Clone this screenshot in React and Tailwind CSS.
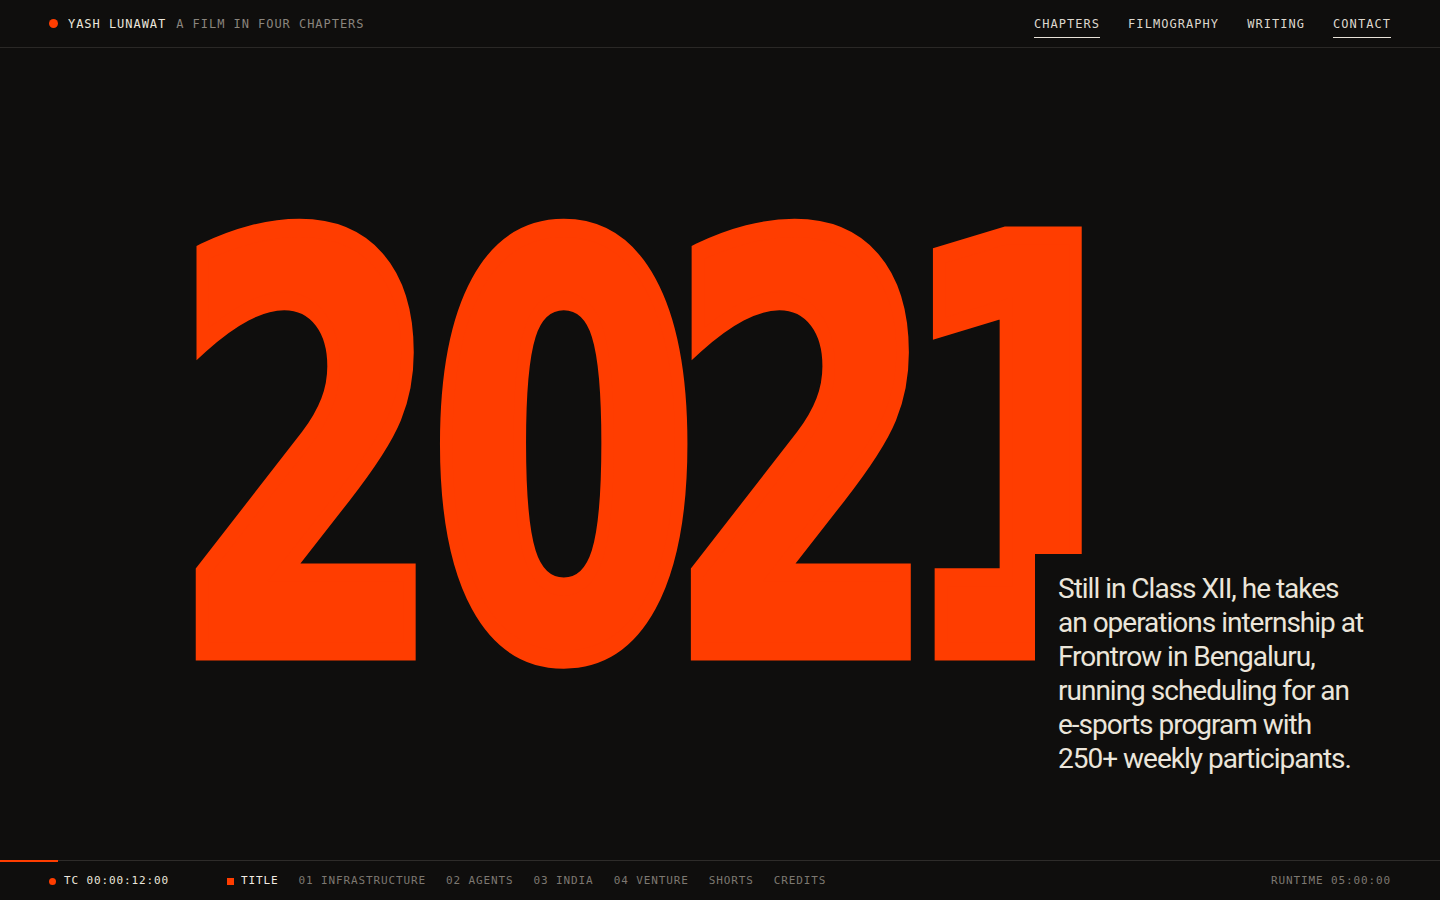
export default function App() {
  const mono = "font-['DejaVu_Sans_Mono','Liberation_Mono',monospace]";
  const chapters = ["01 INFRASTRUCTURE", "02 AGENTS", "03 INDIA", "04 VENTURE", "SHORTS", "CREDITS"];
  return (
    <div className="h-screen w-full bg-[#0f0e0d] flex flex-col overflow-hidden">
      {/* top bar */}
      <header className={`h-[48px] shrink-0 border-b border-[#2a2826] flex items-center justify-between px-[49px] ${mono} text-[12px] tracking-[0.08em]`}>
        <div className="flex items-center">
          <span className="w-[9px] h-[9px] rounded-full bg-[#ff3d00]" />
          <span className="ml-[10px] text-[#ece6dc]">YASH LUNAWAT</span>
          <span className="ml-[10px] text-[#8a857e]">A FILM IN FOUR CHAPTERS</span>
        </div>
        <nav className="flex items-center gap-[28px] mb-[2px] tracking-[1.05px] text-[#ddd7cd]">
          <a className="pt-[8px] pb-[5px] border-b border-[#e8e2d8] leading-[16px]">CHAPTERS</a>
          <a className="pt-[8px] pb-[5px] border-b border-transparent leading-[16px]">FILMOGRAPHY</a>
          <a className="pt-[8px] pb-[5px] border-b border-transparent leading-[16px]">WRITING</a>
          <a className="pt-[8px] pb-[5px] border-b border-[#e8e2d8] leading-[16px]">CONTACT</a>
        </nav>
      </header>

      {/* title card */}
      <main className="relative flex-1 overflow-hidden">
        <div className="pl-[171px] pt-[121px]">
          <div className="origin-top-left scale-x-[0.89] scale-y-[1.297] font-['DejaVu_Sans',sans-serif] font-bold text-[440px] leading-none text-[#ff3d00] [-webkit-text-stroke:14px_#ff3d00] whitespace-nowrap">
            <span className="tracking-[-18px]">2</span>
            <span className="tracking-[-38px]">0</span>
            <span className="tracking-[-49px]">2</span>
            <span>1</span>
          </div>
        </div>
        <p className="absolute left-[1035px] top-[506px] bg-[#0f0e0d] pl-[23px] pt-[18px] pr-[24px] pb-[24px] font-['Roboto',sans-serif] text-[28px] leading-[34px] tracking-[-1px] text-[#ebe5da]">
          Still in Class XII, he takes<br />
          an operations internship at<br />
          Frontrow in Bengaluru,<br />
          running scheduling for an<br />
          e-sports program with<br />
          250+ weekly participants.
        </p>
      </main>

      {/* timeline */}
      <footer className={`relative h-[40px] shrink-0 border-t border-[#2e2c2a] flex items-center px-[49px] pt-[1px] ${mono} text-[11px] tracking-[0.08em]`}>
        <span className="absolute left-0 top-[-1px] w-[58px] h-[2px] bg-[#ff3d00]" />
        <div className="w-[178px] flex items-center">
          <span className="w-[7px] h-[7px] rounded-full bg-[#ff3d00]" />
          <span className="ml-[8px] text-[#ece6dc]">TC 00:00:12:00</span>
        </div>
        <div className="flex items-center gap-[20px] text-[#7d7871]">
          <div className="flex items-center">
            <span className="w-[7px] h-[7px] bg-[#ff3d00]" />
            <span className="ml-[7px] text-[#f2ece2]">TITLE</span>
          </div>
          {chapters.map((c) => (
            <span key={c}>{c}</span>
          ))}
        </div>
        <span className="ml-auto text-[#7d7871]">RUNTIME 05:00:00</span>
      </footer>
    </div>
  );
}
